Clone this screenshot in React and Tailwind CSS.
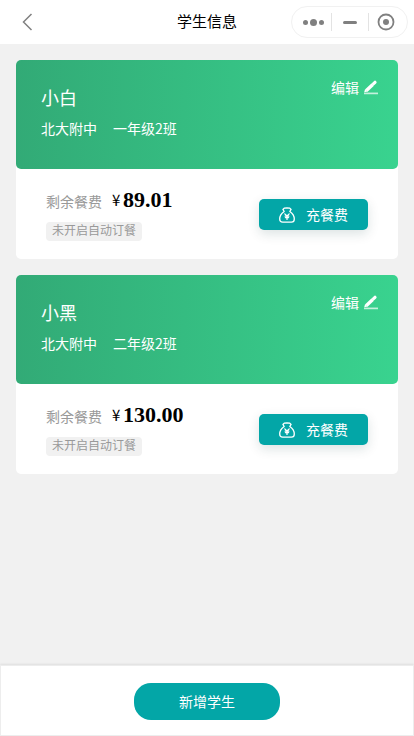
import React from "react";

const students = [
  { id: 1, name: "小白", school: "北大附中", grade: "一年级2班", balance: "89.01" },
  { id: 2, name: "小黑", school: "北大附中", grade: "二年级2班", balance: "130.00" },
];

const EditIcon = () => (
  <svg className="mt-[2px] h-4 w-4" viewBox="0 0 16 16" fill="none">
    <path d="M3.4 10.4 L9.8 4.4" stroke="#fff" strokeWidth="3.4" />
    <path d="M1.2 12.2 L2.1 8.9 L4.9 11.6 Z" fill="#fff" />
    <path d="M10.6 3.6 L12 2.3" stroke="#fff" strokeWidth="3.2" strokeLinecap="round" />
    <path d="M1 13.4 H15" stroke="#fff" strokeOpacity="0.7" strokeWidth="1.7" />
  </svg>
);

const MoneyBagIcon = () => (
  <svg className="h-4 w-4" viewBox="0 0 16 16" fill="none" stroke="#fff" strokeLinejoin="round" strokeLinecap="round">
    <path
      d="M5.2 4.5 L3.9 2.4 L5.2 1.2 L8 0.8 L10.8 1.2 L12.1 2.4 L10.8 4.5 C13.5 6.3 15.3 9 15.3 12 C15.3 14.2 14.2 15.2 12.4 15.2 H3.6 C1.8 15.2 0.7 14.2 0.7 12 C0.7 9 2.5 6.3 5.2 4.5 Z"
      strokeWidth="1.3"
    />
    <path d="M5.8 6.9 L8 9 L10.2 6.9 M8 9 V12.4 M6.2 9.2 H9.8 M6.4 10.6 H9.6" strokeWidth="1.3" />
  </svg>
);

const Capsule = () => (
  <div className="flex h-8 w-[117px] items-center rounded-full border border-[#f1f1f1]">
    <div className="flex w-[39px] items-center justify-center gap-[2px] pl-[3px]">
      <span className="h-[5px] w-[5px] rounded-full bg-[#808080]" />
      <span className="h-[7px] w-[7px] rounded-full bg-[#808080]" />
      <span className="h-[5px] w-[5px] rounded-full bg-[#808080]" />
    </div>
    <span className="h-[18px] w-px bg-[#e3e3e3]" />
    <div className="flex w-9 justify-center">
      <span className="h-[3px] w-[14px] rounded-full bg-[#808080]" />
    </div>
    <span className="h-[18px] w-px bg-[#e3e3e3]" />
    <div className="flex flex-1 justify-center pr-[4px]">
      <svg className="h-[18px] w-[18px]" viewBox="0 0 18 18">
        <circle cx="9" cy="9" r="7.5" fill="none" stroke="#808080" strokeWidth="1.8" />
        <circle cx="9" cy="9" r="3" fill="#808080" />
      </svg>
    </div>
  </div>
);

const StudentCard = ({ student }) => (
  <section className="rounded-[5px] bg-white">
    <div className="flex h-[109px] justify-between rounded-[5px] bg-linear-[92deg,#32aa76,#39d38f] pr-[19px] pl-[25px] text-white">
      <div className="pt-[25px]">
        <h2 className="text-lg leading-6">{student.name}</h2>
        <p className="mt-[9px] flex gap-4 text-sm leading-5">
          <span>{student.school}</span>
          <span>{student.grade}</span>
        </p>
      </div>
      <button className="mt-[17px] flex h-5 items-center gap-1 text-sm leading-5">
        编辑
        <EditIcon />
      </button>
    </div>

    <div className="flex h-[90px] items-start justify-between px-[30px]">
      <div className="pt-[18px]">
        <div className="flex h-[26px] items-center">
          <span className="pt-px text-sm text-[#999]">剩余餐费</span>
          <span className="ml-[10px] w-[11px] text-[15px] text-black">¥</span>
          <span className="font-['Liberation_Serif','Noto_Sans_CJK_SC',serif] text-[22px] leading-[26px] font-bold text-black">
            {student.balance}
          </span>
        </div>
        <span className="mt-[9px] block h-[19px] w-24 rounded bg-[#f1f1f1] px-1.5 text-xs leading-4 text-[#999]">
          未开启自动订餐
        </span>
      </div>
      <button className="mt-[30px] flex h-[31px] w-[109px] items-center rounded-[5px] bg-[#03a6a7] pl-5 text-sm text-white shadow-[0_4px_12px_rgba(0,60,60,0.14)]">
        <MoneyBagIcon />
        <span className="ml-[11px] pb-[2px]">充餐费</span>
      </button>
    </div>
  </section>
);

const App = () => {
  return (
    <div className="flex h-screen w-full flex-col overflow-hidden bg-[#f1f1f1] font-['Noto_Sans_CJK_SC',sans-serif]">
      {/* Nav bar */}
      <header className="grid h-11 shrink-0 grid-cols-[1fr_auto_1fr] items-center bg-white pr-[6px] pl-[22px]">
        <button aria-label="返回">
          <svg className="h-[18px] w-[11px]" viewBox="0 0 11 18" fill="none">
            <path d="M9.5 1 L1.5 9 L9.5 17" stroke="#808080" strokeWidth="1.5" />
          </svg>
        </button>
        <h1 className="-ml-4 pb-[2px] text-[15px] leading-5 text-black">学生信息</h1>
        <div className="flex justify-end">
          <Capsule />
        </div>
      </header>

      {/* Students */}
      <main className="flex flex-1 flex-col gap-4 p-4">
        {students.map((student) => (
          <StudentCard key={student.id} student={student} />
        ))}
      </main>

      {/* Bottom bar */}
      <footer className="flex h-[71px] shrink-0 items-start justify-center border border-[#ededed] bg-white pt-[17px] shadow-[0_-1px_2px_rgba(0,0,0,0.08)]">
        <button className="h-[37px] w-[146px] rounded-[17px] bg-[#03a6a7] pb-[2px] text-sm text-white">新增学生</button>
      </footer>
    </div>
  );
};

export default App;
